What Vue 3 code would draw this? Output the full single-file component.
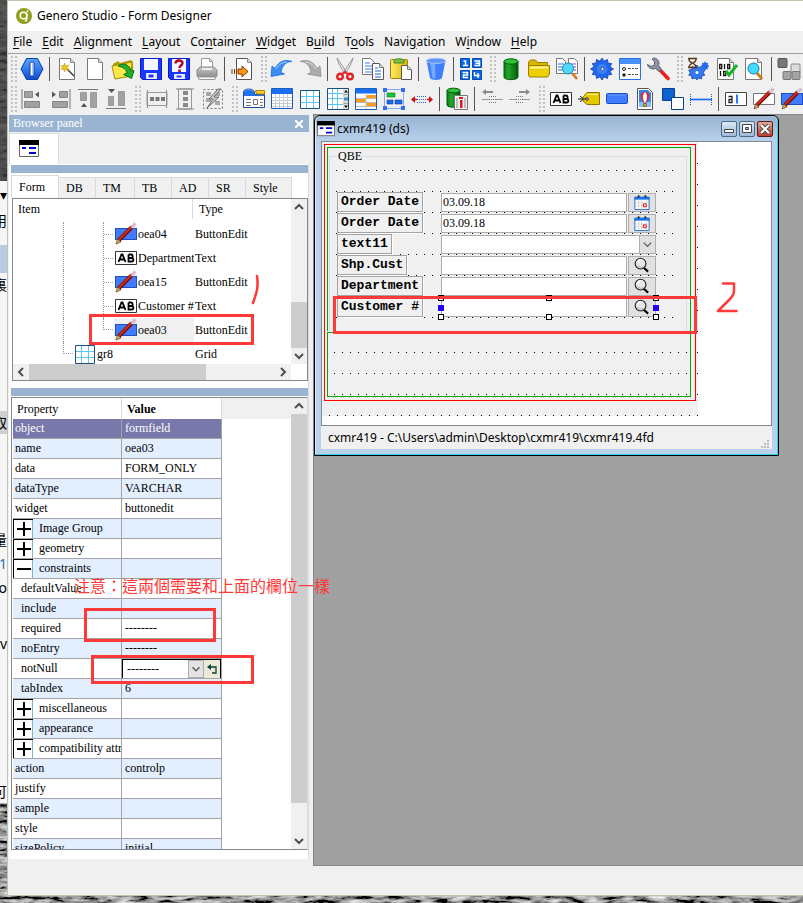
<script setup>
import { ref } from 'vue'

const menus = [
  ['', 'F', 'ile'], ['', 'E', 'dit'], ['', 'A', 'lignment'], ['', 'L', 'ayout'],
  ['Co', 'n', 'tainer'], ['', 'W', 'idget'], ['B', 'u', 'ild'], ['T', 'o', 'ols'],
  ['Navi', 'g', 'ation'], ['W', 'i', 'ndow'], ['', 'H', 'elp'],
]

const toolbars = [
  ['#', 'hex', '|', 'wand', 'new', 'open', 'save', 'saveas', 'print', '|', 'export',
    '#', 'undo', 'redo', '|', 'cut', 'copy', 'paste', '|', 'trash', '|', 'numbers',
    '#', 'database', 'folder', 'compare', '|', 'gear', 'options', 'wrench',
    '#', 'build', 'compile', 'preview', '|', 'blocks'],
  ['#', 'alignleft', 'alignright', 'aligntop', 'alignbottom', '#', 'spaceh', 'spacev', 'spaceoff',
    '#', 'folderpage', 'table', 'grid', 'scrollgrid', 'tree', 'group', 'stretch', '|', 'dbreport', '|', 'hleft', 'hright',
    '#', 'label', 'tag', 'button', 'image', 'canvas', 'line', '|', 'edit', 'textedit', 'buttonedit'],
]

const tabs = ['Form', 'DB', 'TM', 'TB', 'AD', 'SR', 'Style']
const activeTab = ref('Form')

const treeRows = [
  { name: 'oea04', type: 'ButtonEdit', icon: 'buttonedit' },
  { name: 'Department', type: 'Text', icon: 'label' },
  { name: 'oea15', type: 'ButtonEdit', icon: 'buttonedit' },
  { name: 'Customer #', type: 'Text', icon: 'label' },
  { name: 'oea03', type: 'ButtonEdit', icon: 'buttonedit', selected: true, last: true },
  { name: 'gr8', type: 'Grid', icon: 'grid', outer: true },
]

const properties = [
  { name: 'object', value: 'formfield', head: true },
  { name: 'name', value: 'oea03' },
  { name: 'data', value: 'FORM_ONLY' },
  { name: 'dataType', value: 'VARCHAR' },
  { name: 'widget', value: 'buttonedit' },
  { name: 'Image Group', toggle: '+' },
  { name: 'geometry', toggle: '+' },
  { name: 'constraints', toggle: '-' },
  { name: 'defaultValue', child: true },
  { name: 'include', child: true },
  { name: 'required', value: '--------', child: true },
  { name: 'noEntry', value: '--------', child: true },
  { name: 'notNull', value: '--------', child: true, editor: true },
  { name: 'tabIndex', value: '6', child: true },
  { name: 'miscellaneous', toggle: '+' },
  { name: 'appearance', toggle: '+' },
  { name: 'compatibility attri', toggle: '+' },
  { name: 'action', value: 'controlp' },
  { name: 'justify' },
  { name: 'sample' },
  { name: 'style' },
  { name: 'sizePolicy', value: 'initial' },
]

const fields = ref([
  { label: 'Order Date', value: '03.09.18', kind: 'calendar' },
  { label: 'Order Date', value: '03.09.18', kind: 'calendar' },
  { label: 'text11', value: '', kind: 'combo' },
  { label: 'Shp.Cust', value: '', kind: 'search' },
  { label: 'Department', value: '', kind: 'search' },
  { label: 'Customer #', value: '', kind: 'search', selected: true },
])
</script>

<template>
  <svg class="defs" aria-hidden="true">
    <defs>
      <linearGradient id="g-blue" x1="0" y1="0" x2="0" y2="1"><stop offset="0" stop-color="#5ea6ff" /><stop offset="1" stop-color="#0b4ed0" /></linearGradient>
      <linearGradient id="g-green"><stop offset="0" stop-color="#0b7a12" /><stop offset=".3" stop-color="#22a82a" /><stop offset="1" stop-color="#04580a" /></linearGradient>
      <linearGradient id="g-gray" x1="0" y1="0" x2="0" y2="1"><stop offset="0" stop-color="#c8c8c8" /><stop offset="1" stop-color="#8c8c8c" /></linearGradient>
      <linearGradient id="g-yellow"><stop offset="0" stop-color="#ffe96a" /><stop offset="1" stop-color="#d8b800" /></linearGradient>
      <filter id="rock" x="0" y="0" width="100%" height="100%">
        <feTurbulence type="fractalNoise" baseFrequency="0.06 0.25" numOctaves="4" seed="7" />
        <feColorMatrix values="1.6 0 0 0 -.5  1.6 0 0 0 -.5  1.6 0 0 0 -.5  0 0 0 0 1" />
      </filter>
      <pattern id="dots" width="8" height="21" patternUnits="userSpaceOnUse"><rect width="1" height="1" fill="#000" /></pattern>
      <pattern id="grip" width="4" height="4" patternUnits="userSpaceOnUse"><rect width="2" height="2" fill="#c2c2c2" /></pattern>
    </defs>

    <symbol id="i-hex" viewBox="0 0 24 24"><path d="M1 12 6.500 1.500h11L23 12l-5.500 10.500h-11z" fill="url(#g-blue)" stroke="#0a3ea8" /><rect x="10" y="5" width="4" height="14" rx="1" fill="#fff" stroke="#0a3fae" /><path d="M12.500 6v12" stroke="#a8ccff" /></symbol>
    <symbol id="i-wand" viewBox="0 0 24 24"><path d="M4.500 1.500h11l4 4v17h-15z" fill="#fff" stroke="#777" /><path d="M15.500 1.500v4h4" fill="#ddd" stroke="#888" /><path d="M12 12l7 7" stroke="#444" stroke-width="1.600" /><path d="M9.500 6l1 3 3.500-1-2 2.500 2 2.500-3.500-.8-1 2.800-1-2.800-2.500.3 1.500-2L6 8.500l2.500.5z" fill="#f0c818" stroke="#b38a00" stroke-width=".5" /></symbol>
    <symbol id="i-new" viewBox="0 0 24 24"><path d="M4.500 1.500h11l4 4v17h-15z" fill="#fff" stroke="#777" /><path d="M15.500 1.500v4h4" fill="#ddd" stroke="#888" /></symbol>
    <symbol id="i-open" viewBox="0 0 24 24"><path d="M2 7l5-3 2 2 11-3 2 2v14l-18 3z" fill="#b59b00" /><path d="M1 9l20-4-1 14-16 3z" fill="#ffe74a" stroke="#a58b00" /><path d="M7 9c6-4 12-1 13 5l3-.5-2.500 8-8-4 3.500-1.500C15 12 12 10 7 9z" fill="#22b02b" stroke="#0b7513" /></symbol>
    <symbol id="i-save" viewBox="0 0 24 24"><path d="M1.500 1.500h21v21h-19l-2-2z" fill="#1a37ff" stroke="#0a1cc8" /><path d="M5 2h14v11H5z" fill="#f2f6ff" /><path d="M7 16h11v6H7z" fill="#e2e6f2" /><rect x="9" y="17" width="6" height="4" fill="#1a37ff" stroke="#fff" /></symbol>
    <symbol id="i-saveas" viewBox="0 0 24 24"><path d="M1.500 1.500h21v21h-19l-2-2z" fill="#1a37ff" stroke="#0a1cc8" /><path d="M5 2h14v13H5z" fill="#f2f6ff" /><path d="M7 17h11v5H7z" fill="#e2e6f2" /><rect x="9" y="18" width="6" height="3" fill="#1a37ff" stroke="#fff" /><path d="M8.500 6.500C8.500 2.500 15.500 2.500 15.500 6c0 2.500-3 2.500-3 5" fill="none" stroke="#b3001b" stroke-width="2.400" /><rect x="11.300" y="12.500" width="2.500" height="2.500" fill="#b3001b" /></symbol>
    <symbol id="i-print" viewBox="0 0 24 24"><path d="M6.500 13V1.500h8l3 3V13" fill="#fff" stroke="#999" /><path d="M14.500 1.500v3h3" fill="none" stroke="#999" /><path d="M2 13l3-3h14l3 3v6l-2 1H4l-2-1z" fill="url(#g-gray)" stroke="#8a8a8a" /><path d="M7 11h10v2H7z" fill="#eee" /><path d="M3 20h18l-1 2.500H4z" fill="#f8f8f8" stroke="#999" /></symbol>
    <symbol id="i-export" viewBox="0 0 24 24"><path d="M6.500 1.500h11l4 4v17h-15z" fill="#fff" stroke="#555" /><path d="M17.500 1.500v4h4" fill="#ddd" stroke="#888" /><path d="M8 12h4V9l6 5.500-6 5.500v-3H8z" fill="#ff9414" stroke="#7a3b00" /><path d="M2 12v5M4.500 12v5M6.500 12v5" stroke="#7a3b00" /></symbol>
    <symbol id="i-undo" viewBox="0 0 24 24"><path d="M1 19.500 2 9l3 2.500C9 4 15 2 22 4.500c-6 0-10 4-11 11l3.500 1.500z" fill="#3b8ef5" stroke="#1769d8" stroke-width=".8" /><path d="M6 12c3-5 7-7 11-7" stroke="#a9d2ff" fill="none" /></symbol>
    <symbol id="i-redo" viewBox="0 0 24 24"><path d="M23 19.500 22 9l-3 2.500C15 4 9 2 2 4.500c6 0 10 4 11 11L9.500 17z" fill="#ababab" stroke="#8f8f8f" stroke-width=".8" /><path d="M18 12c-3-5-7-7-11-7" stroke="#ddd" fill="none" /></symbol>
    <symbol id="i-cut" viewBox="0 0 24 24"><path d="M4 1l9.500 14-2 1.500C8 11 5 6 4 1zM20 1l-9.500 14 2 1.500C16 11 19 6 20 1z" fill="#e6e6e6" stroke="#888" stroke-width=".8" /><circle cx="7" cy="19.500" r="2.800" fill="none" stroke="#e02424" stroke-width="2.400" /><circle cx="17" cy="19.500" r="2.800" fill="none" stroke="#e02424" stroke-width="2.400" /><path d="M9 17l3-2 3 2" stroke="#e02424" stroke-width="2" fill="none" /></symbol>
    <symbol id="i-copy" viewBox="0 0 24 24"><path d="M1.500 1.500h8l4 4v12h-12z" fill="#fff" stroke="#777" /><path d="M4 6h5M4 9h7M4 12h7M4 15h7" stroke="#3b7fe8" /><path d="M11.500 6.500h7l4 4v12h-11z" fill="#fff" stroke="#555" /><path d="M18.500 6.500v4h4" fill="#ddd" stroke="#777" /><path d="M14 11h3M14 14h6M14 17h6M14 20h6" stroke="#1d66dd" /></symbol>
    <symbol id="i-paste" viewBox="0 0 24 24"><rect x="1.500" y="2.500" width="17" height="19" rx="1" fill="url(#g-yellow)" stroke="#a87c00" /><path d="M5 4c0-3 10-3 10 0v2H5z" fill="#77c043" stroke="#4a8a22" /><path d="M12.500 8.500h6l4 4v10h-10z" fill="#fff" stroke="#555" /><path d="M18.500 8.500v4h4" fill="#ddd" stroke="#777" /></symbol>
    <symbol id="i-trash" viewBox="0 0 24 24"><path d="M2.500 3.500 6 21c1 2.500 11 2.500 12 0l3.500-17.500z" fill="#3f7fff" /><path d="M6 6l2.500 15 3 .5L11 6z" fill="#78a8ff" /><ellipse cx="12" cy="3.800" rx="9.500" ry="2.600" fill="#5f93f5" stroke="#a7c5ff" /></symbol>
    <symbol id="i-numbers" viewBox="0 0 24 24"><g fill="#0d6be8" stroke="#0648b0"><path d="M1.500 1.500h9v9h-9zM13.500 1.500h9v9h-9zM1.500 13.500h9v9h-9zM13.500 13.500h9v9h-9z" /></g><g fill="none" stroke="#fff" stroke-width="1.400"><path d="M4.500 4h2v4.500M4 8.500h5M15.500 4h5v4.500h-5M16.500 6.300h4M3.500 15.500h5V18h-4v2.500h4.500M15.500 15v3.500h5M19 16v5" /></g></symbol>
    <symbol id="i-database" viewBox="0 0 24 24"><path d="M5 4.500v15.500c0 3.500 14 3.500 14 0V4.500z" fill="url(#g-green)" stroke="#045c0a" /><ellipse cx="12" cy="4.500" rx="7" ry="2.700" fill="#2fc23a" stroke="#045c0a" /></symbol>
    <symbol id="i-folder" viewBox="0 0 24 24"><path d="M1.500 18V5l2-2h5l2 2.500h10V9" fill="#d9b600" stroke="#9a8000" /><path d="M1.500 8.500h21V17l-2 3h-18l-1-2z" fill="#ecd000" stroke="#9a8000" /><path d="M3 10.500h18" stroke="#fff79a" stroke-width="2" /></symbol>
    <symbol id="i-compare" viewBox="0 0 24 24"><path d="M1.500 1.500h6l3 3v12h-9zM13.500 1.500h6l3 3v12h-9z" fill="#fff" stroke="#777" /><path d="M3 7h6M3 10h6M3 13h6" stroke="#2a6fe0" /><path d="M15 7h6M15 10h6M15 13h6" stroke="#8a3fd0" /><path d="M17 16l5 6" stroke="#d07a1c" stroke-width="2.600" /><circle cx="13" cy="11.500" r="5.500" fill="#4fd8f8" stroke="#158fb8" /></symbol>
    <symbol id="i-gear" viewBox="0 0 24 24"><path d="M12 1l2 3.200L17.500 2.500l.5 3.700 3.700.3-1.700 3.300L23.500 12l-3.500 2.200 1.700 3.300-3.700.3-.5 3.700-3.500-1.700L12 23l-2-3.200-3.500 1.700-.5-3.700-3.700-.3L4 14.200.5 12 4 9.800 2.300 6.500 6 6.200l.5-3.700L10 4.200z" fill="#2268ee" stroke="#0a3cb0" stroke-width=".8" /><circle cx="12" cy="12" r="5" fill="#3a80f8" /><circle cx="12.500" cy="12" r="1.500" fill="#fff" stroke="#222" stroke-width=".6" /></symbol>
    <symbol id="i-options" viewBox="0 0 24 24"><path d="M1.500 1.500h21v21h-21z" fill="#fff" stroke="#2a6fe0" /><path d="M2 2h20v5H2z" fill="#4a90ff" /><circle cx="6" cy="12" r="1.500" fill="none" stroke="#222" /><circle cx="6" cy="18" r="1.700" fill="#222" /><path d="M10 11.500h3M14 11.500h2M17 11.500h3M10 17.500h3M14 17.500h2M17 17.500h3" stroke="#555" /></symbol>
    <symbol id="i-wrench" viewBox="0 0 24 24"><path d="M13 12l9 9.500" stroke="#ee1c1c" stroke-width="3.600" stroke-linecap="round" /><path d="M8 1c4 .5 6 4 4.500 7.500l3 4-2.500 2-3.500-3C6 13 2 11 1.500 7.500l3.500 2L8.500 8V4.500L6 2z" fill="#8d93a3" stroke="#5a6070" /></symbol>
    <symbol id="i-build" viewBox="0 0 24 24"><path d="M11 8l1.500 2.500 3-1 .3 3 3 .5-1.500 2.700 1.500 2.500-3 .8-.3 3-3-1L11 23l-2-2-3 1-.3-3-3-.8 1.500-2.500L2.700 13l3-.5.3-3 3 1z" fill="#3478ee" stroke="#0a3cb0" stroke-width=".7" /><circle cx="11" cy="15.500" r="1.500" fill="#fff" /><path d="M19 4l1 2 2-.3-.3 2 1.600 1.300-1.600 1.300.3 2-2-.3-1 2-1-2-2 .3.300-2L14.700 9l1.600-1.300-.3-2 2 .3z" fill="#2268ee" /><path d="M2 1.500h9M2 10.500h9M3 2c0 4 3 3 3 4s-3 1-3 4.500M10 2c0 4-3 3-3 4s3 1 3 4.500" fill="none" stroke="#5a3510" stroke-width="1.300" /></symbol>
    <symbol id="i-compile" viewBox="0 0 24 24"><path d="M3.500 1.500h12l4 4v17h-16z" fill="#fff" stroke="#777" /><path d="M15.500 1.500v4h4" fill="#ddd" stroke="#777" /><g fill="none" stroke="#111" stroke-width="1.300"><path d="M5.700 7.500h2v4h-2zM10.500 7v5M13.700 7.500h2v4h-2zM6.500 14v5M9.700 14.500h2v4h-2z" /></g><path d="M12 14l3 4 8-10" fill="none" stroke="#18b52b" stroke-width="3.200" /></symbol>
    <symbol id="i-preview" viewBox="0 0 24 24"><path d="M3.500 1.500h12l4 4v17h-16z" fill="#fff" stroke="#777" /><path d="M15.500 1.500v4h4" fill="#ddd" stroke="#777" /><path d="M15 16l5 6" stroke="#d07a1c" stroke-width="2.800" /><circle cx="11.500" cy="11.500" r="5.500" fill="#3fdcff" stroke="#1478a0" /></symbol>
    <symbol id="i-blocks" viewBox="0 0 24 24"><rect x="1" y="1.500" width="9" height="9" rx="1" fill="#777" stroke="#555" /><rect x="14" y="7" width="9" height="9" rx="1" fill="#ddd" stroke="#888" /><rect x="6" y="14.500" width="8" height="8" rx="1" fill="#a5a5a5" stroke="#777" /><rect x="15" y="14.500" width="8" height="8" rx="1" fill="#a5a5a5" stroke="#777" /></symbol>

    <symbol id="i-alignleft" viewBox="0 0 24 24"><g fill="#a2a2a2" stroke="#858585"><path d="M4.500 4.500h8v6h-8zM4.500 14.500h15v6h-15z" /></g><path d="M2 2v20" stroke="#777" /><path d="M19 4.500v6l-4-3z" fill="#555" /></symbol>
    <symbol id="i-alignright" viewBox="0 0 24 24"><g fill="#a2a2a2" stroke="#858585"><path d="M11.500 4.500h8v6h-8zM4.500 14.500h15v6h-15z" /></g><path d="M22 2v20" stroke="#777" /><path d="M4 4.500v6l4-3z" fill="#555" /></symbol>
    <symbol id="i-aligntop" viewBox="0 0 24 24"><g fill="#a2a2a2" stroke="#9a9a9a"><path d="M4.500 5.500h6v8h-6zM14.500 5.500h6v15h-6z" /></g><path d="M2 2.500h20" stroke="#777" /><path d="M5 20h6l-3-4z" fill="#555" /></symbol>
    <symbol id="i-alignbottom" viewBox="0 0 24 24"><g fill="#a2a2a2" stroke="#9a9a9a"><path d="M4.500 9.500h5v9h-5zM14.500 4.500h6v14h-6z" /></g><path d="M2 21.500h20" stroke="#777" /><path d="M4 2h7l-3.500 4z" fill="#555" /></symbol>
    <symbol id="i-spaceh" viewBox="0 0 24 24"><path d="M2.500 3v18M21.500 3v18" stroke="#888" /><path d="M2 5.500h20v13H2z" fill="none" stroke="#999" /><path d="M5 10h4v4H5zM10.500 10h4v4h-4zM16 10h4v4h-4z" fill="#777" /></symbol>
    <symbol id="i-spacev" viewBox="0 0 24 24"><path d="M5.500 2h13v20h-13z" fill="none" stroke="#999" /><path d="M3 2h18M3 22h18" stroke="#888" /><path d="M10 4h5v4h-5zM10 10h5v4h-5zM10 16h5v4h-5z" fill="#888" /></symbol>
    <symbol id="i-spaceoff" viewBox="0 0 24 24"><path d="M2.500 2.500h19v19h-19z" fill="none" stroke="#777" stroke-dasharray="2 2" /><path d="M5 5h5v4H5zM5 11h5v4H5zM14 5h5v4h-5zM14 14h5v4h-5z" fill="#a8a8a8" /><path d="M17 2 8 12h4l-6 9 12-11h-5l7-8z" fill="#c5c5c5" stroke="#555" stroke-width=".8" /></symbol>
    <symbol id="i-folderpage" viewBox="0 0 24 24"><path d="M1.500 5c0-4 10-4 11 0v2.500h10v13h-21z" fill="#fff" stroke="#1a4ba0" /><path d="M2 5c0-3 9-3 10 0l1 3h9v1H2z" fill="#2070f0" /><path d="M13.500 3.500h9V7h-8z" fill="#ffc93a" stroke="#b88500" /><path d="M4 12.500h5M4 15.500h5M4 18.500h5M18 12.500h3M18 15.500h3M18 18.500h3M11.500 12.500h4v5h-4z" fill="none" stroke="#777" /></symbol>
    <symbol id="i-table" viewBox="0 0 24 24"><path d="M1.500 1.500h21v20h-21z" fill="#fff" stroke="#1a5cc0" /><path d="M2 2h20v5H2z" fill="#1a6cf0" /><path d="M2 10.500h20M2 13.500h20M2 16.500h20M2 19.500h20M5.500 7v14M9.500 7v14M13.500 7v14M17.500 7v14" stroke="#c8ccd4" /></symbol>
    <symbol id="i-grid" viewBox="0 0 24 24"><path d="M2.500 3.500h19v18h-19z" fill="#fff" stroke="#1d4f80" /><path d="M3 9.500h18M3 15.500h18M8.500 4v17M15.500 4v17" stroke="#5cc6ee" /></symbol>
    <symbol id="i-scrollgrid" viewBox="0 0 24 24"><path d="M1.500 1.500h21v21h-21z" fill="#fff" stroke="#1d4f80" /><path d="M2 6.500h15M2 11.500h15M2 17.500h15M6.500 2v20M11.500 2v20" stroke="#5cc6ee" /><path d="M17 2h5v20h-5z" fill="#ddd" /><path d="M17.500 7.500h4M17.500 16.500h4" stroke="#999" /><path d="M18 10.500h4v3h-4z" fill="#3b8fd8" /><path d="M18 5.500l2-2.500 2 2.500zM18 18.500l2 2.500 2-2.500z" fill="#111" /></symbol>
    <symbol id="i-tree" viewBox="0 0 24 24"><path d="M1.500 1.500h21v21h-21z" fill="#fff" stroke="#1a5cc0" /><path d="M2 2h20v4.500H2z" fill="#1a6cf0" /><path d="M2 12h10v3.500H2zM12 8h10v3H12zM12 16h10v3.500H12z" fill="#ff9a1f" /><path d="M12 7v15" stroke="#ccc" /><path d="M2 11.500h20M2 15.500h20M2 19.500h20" stroke="#bbb" /></symbol>
    <symbol id="i-group" viewBox="0 0 24 24"><path d="M2.500 2.500h19v19h-19z" fill="none" stroke="#2260e8" stroke-dasharray="1 1" /><path d="M1 1h4v4H1zM19 1h4v4h-4zM1 19h4v4H1zM19 19h4v4h-4z" fill="#2f6ff5" /><path d="M5 6h8v4H5z" fill="#12c832" stroke="#0a7a1a" stroke-width=".6" /><path d="M5 13h6v4H5zM13 13h7v4h-7z" fill="#1a6cf0" stroke="#0a3ea0" stroke-width=".6" /></symbol>
    <symbol id="i-stretch" viewBox="0 0 24 24"><path d="M1 12.500 5 9v7zM23 12.500 19 9v7z" fill="#d01018" /><path d="M4 12.500h3M17 12.500h3" stroke="#d01018" stroke-width="1.600" /><path d="M7 9.500h10M7 12.500h10M7 15.500h10" stroke="#2468e8" stroke-dasharray="1 1" /></symbol>
    <symbol id="i-dbreport" viewBox="0 0 24 24"><path d="M2 3.500V18c0 3 13 3 13 0V3.500z" fill="url(#g-green)" stroke="#045c0a" /><ellipse cx="8.500" cy="3.500" rx="6.500" ry="2.300" fill="#2fc23a" stroke="#045c0a" /><path d="M9.500 8.500h13v14h-13z" fill="#f3f3f3" stroke="#777" /><path d="M12 11v10M20 11v10" stroke="#888" /><path d="M14 10h4v2h-4zM15 13h2.500v8H15z" fill="#e01818" /></symbol>
    <symbol id="i-hleft" viewBox="0 0 24 24"><path d="M2 5l4-3v2h7v2H6v2z" fill="#8c8c8c" /><path d="M2 12.500h7M16 12.500h7" stroke="#999" /><path d="M9 9.500h7M9 12.500h7M9 15.500h7" stroke="#777" stroke-dasharray="1 1" /></symbol>
    <symbol id="i-hright" viewBox="0 0 24 24"><path d="M22 5l-4-3v2h-7v2h7v2z" fill="#8c8c8c" /><path d="M1 12.500h7M15 12.500h7" stroke="#999" /><path d="M8 9.500h7M8 12.500h7M8 15.500h7" stroke="#777" stroke-dasharray="1 1" /></symbol>
    <symbol id="i-label" viewBox="0 0 24 24"><path d="M1.500 5.500h21v13h-21z" fill="#fff" stroke="#333" /><path d="M4.500 16 7.500 8.500h1L11.500 16M6 13.500h4M14.500 8.500V15.500h3c2.500 0 2.500-3.500 0-3.500h-3M17 12c2.500 0 2-3.500 0-3.500h-2.500" fill="none" stroke="#000" stroke-width="1.800" /></symbol>
    <symbol id="i-tag" viewBox="0 0 24 24"><path d="M6 10l4-4.500h12.500v12H10L6 14z" fill="#e6c800" stroke="#8d7500" /><path d="M10 7.500h11" stroke="#fff38a" /><path d="M1 12h9M3 9.500c3 0 3 5 0 5" fill="none" stroke="#222" /><circle cx="10" cy="12" r="1.300" fill="#fff" stroke="#222" /></symbol>
    <symbol id="i-button" viewBox="0 0 24 24"><rect x="1.500" y="6.500" width="21" height="10" rx="1" fill="#3f7cff" stroke="#1b4fc0" /><path d="M3 8h18" stroke="#6d9cff" /></symbol>
    <symbol id="i-image" viewBox="0 0 24 24"><path d="M4.500 1.500h11l4 4v17h-15z" fill="#fff" stroke="#555" /><path d="M6 3h9l3 3v14H6z" fill="#2f86ee" /><path d="M6 15h12v5H6z" fill="#7cc0ff" /><path d="M12 4.500c7 1 3.500 9 1.500 11h-3C8.500 13.500 5 5.500 12 4.500z" fill="#e12b2b" /><path d="M12 5c3 2 2 8 .7 10h-1.400C10 13 9 7 12 5z" fill="#fff" /><path d="M10.500 16.500h3v3h-3z" fill="#d8a020" stroke="#6b4a00" stroke-width=".6" /></symbol>
    <symbol id="i-canvas" viewBox="0 0 24 24"><path d="M1.500 1.500h12v12h-12z" fill="#0f62d0" stroke="#08408f" /><path d="M10.500 10.500h12v12h-12z" fill="#fff" stroke="#08408f" /></symbol>
    <symbol id="i-line" viewBox="0 0 24 24"><path d="M1.500 7v11M22.500 7v11" stroke="#0a58e0" stroke-dasharray="1 1" /><path d="M1 12.500h22" stroke="#1668f8" stroke-width="1.600" /></symbol>
    <symbol id="i-edit" viewBox="0 0 24 24"><path d="M1.500 5.500h21v13h-21z" fill="#fff" stroke="#444" /><path d="M4.500 9.500h3.500v6H5v-3h3" fill="none" stroke="#222" stroke-width="1.300" /><path d="M13 7.500v9" stroke="#1668f8" stroke-width="1.800" /></symbol>
    <symbol id="i-textedit" viewBox="0 0 24 24"><path d="M1.500 6.500h21v11h-21z" fill="#fff" stroke="#777" /><path d="M5 18 18 5" stroke="#701008" stroke-width="4" /><path d="M5 17.500 17.500 5" stroke="#d42a18" stroke-width="2" /><path d="M17.500 5.500l4-4" stroke="#d8c0d4" stroke-width="3.500" /><path d="M2 22l1.500-5L7 20z" fill="#f2a53c" stroke="#333" stroke-width=".6" /></symbol>
    <symbol id="i-buttonedit" viewBox="0 0 24 24"><rect x="1.500" y="6.500" width="21" height="11" fill="#3f7cff" stroke="#1b4fc0" /><path d="M5 18 18 5" stroke="#701008" stroke-width="4" /><path d="M5 17.500 17.500 5" stroke="#d42a18" stroke-width="2" /><path d="M17.500 5.500l4-4" stroke="#d8c0d4" stroke-width="3.500" /><path d="M2 22l1.500-5L7 20z" fill="#f2a53c" stroke="#333" stroke-width=".6" /></symbol>

    <symbol id="i-form" viewBox="0 0 20 18"><path d="M.5.5h19v16H.5z" fill="#fff" stroke="#666" /><path d="M0 0h20v5H0z" fill="#000" /><path d="M3 8h4M10 8h7M10 13h7" stroke="#00c" stroke-width="2" /></symbol>
    <symbol id="i-calendar" viewBox="0 0 18 18"><path d="M1.500 3.500h15v13h-15z" fill="#fff" stroke="#1668d8" /><path d="M1 3h16v3H1z" fill="#1672e8" /><path d="M2 9.500h14M2 12.500h14M5.500 6v10M8.500 6v10M13.500 6v10" stroke="#d4d4d4" /><path d="M10.500 10.500h3v3h-3z" fill="#fff" stroke="#e00000" /><path d="M5.500 1v3M12.500 1v3M4 2.500h3M11 2.500h3" stroke="#333" /></symbol>
    <symbol id="i-search" viewBox="0 0 18 18"><path d="M10 10.500l5.500 5" stroke="#000" stroke-width="2.200" /><circle cx="7.500" cy="7" r="5.700" fill="#e8e8e8" stroke="#222" stroke-width="1.200" /><path d="M4.500 8.500c1 3 5 3 6 1" stroke="#aaa" fill="none" /><path d="M4.500 5.500c.5-1.500 2-2 3-2" stroke="#fff" stroke-width="1.500" fill="none" /></symbol>
    <symbol id="i-up" viewBox="0 0 16 16"><path d="M4 10l4-4 4 4" fill="none" stroke="#505050" stroke-width="2" /></symbol>
    <symbol id="i-down" viewBox="0 0 16 16"><path d="M4 6l4 4 4-4" fill="none" stroke="#505050" stroke-width="2" /></symbol>
    <symbol id="i-left" viewBox="0 0 16 16"><path d="M10 4L6 8l4 4" fill="none" stroke="#505050" stroke-width="2" /></symbol>
    <symbol id="i-right" viewBox="0 0 16 16"><path d="M6 4l4 4-4 4" fill="none" stroke="#505050" stroke-width="2" /></symbol>
  </svg>

  <div class="desktop">
    <svg class="rock" aria-hidden="true"><rect width="100%" height="100%" filter="url(#rock)" /><rect width="8" height="200" fill="#3c3c3c" opacity=".8" /></svg>
    <div class="behind">
      <span class="frag mark">▾</span>
      <span class="frag cjk">用</span>
      <span class="frag chip"></span>
      <span class="frag cjk low">裏</span>
      <span class="frag pick">取</span>
      <span class="frag cjk far">量</span>
      <span class="frag blue">41</span>
      <span class="frag">o</span>
      <span class="frag v">v</span>
      <span class="frag cjk end">可</span>
    </div>

    <div class="window">
      <header class="titlebar">
        <svg class="logo" viewBox="0 0 16 16" aria-hidden="true"><circle cx="8" cy="8" r="8" fill="#8f9f1e" /><circle cx="7.500" cy="7.500" r="3.300" fill="none" stroke="#fff" stroke-width="1.500" /><path d="M10.800 5v5.500c0 1.500-1 2.500-2 2.500" stroke="#fff" stroke-width="1.400" fill="none" /><circle cx="11.500" cy="3.200" r=".9" fill="#fff" /></svg>
        <h1>Genero Studio - Form Designer</h1>
      </header>
      <nav class="menubar">
        <button v-for="m in menus" :key="m.join('')" type="button">{{ m[0] }}<u>{{ m[1] }}</u>{{ m[2] }}</button>
      </nav>
      <div class="toolbars">
        <div v-for="(bar, b) in toolbars" :key="b" class="toolbar" :class="{ second: b === 1 }">
          <template v-for="(item, i) in bar" :key="i">
            <svg v-if="item === '#'" class="grip" aria-hidden="true"><rect width="100%" height="100%" fill="url(#grip)" /></svg>
            <i v-else-if="item === '|'" class="sep"></i>
            <button v-else type="button" class="tool" :aria-label="item"><svg><use :href="'#i-' + item" /></svg></button>
          </template>
        </div>
      </div>

      <div class="work">
        <aside class="browser">
          <div class="panel-title">
            <h2>Browser panel</h2>
            <button type="button" aria-label="Close"><svg viewBox="0 0 8 8"><path d="M0 0l8 8M8 0L0 8" stroke="#fff" stroke-width="2" /></svg></button>
          </div>
          <div class="doc-tabs"><button type="button" aria-label="Form document"><svg><use href="#i-form" /></svg></button></div>
          <div class="panes">
            <div class="bar"></div>
            <div class="tabs">
              <button v-for="t in tabs" :key="t" type="button" :class="{ active: t === activeTab }" @click="activeTab = t">{{ t }}</button>
            </div>
            <div class="tree-box">
              <div class="tree-main">
                <div class="tree-view">
                  <div class="tree-head"><span>Item</span><span>Type</span></div>
                  <div v-for="r in treeRows" :key="r.name" class="tree-row" :class="{ outer: r.outer, last: r.last, selected: r.selected }">
                    <i class="rail"></i><i class="rail inner"></i>
                    <div class="node"><svg><use :href="'#i-' + r.icon" /></svg><span>{{ r.name }}</span></div>
                    <span class="type">{{ r.type }}</span>
                  </div>
                </div>
                <div class="vscroll" aria-hidden="true"><svg><use href="#i-up" /></svg><i class="gap"></i><i class="thumb"></i><svg><use href="#i-down" /></svg></div>
              </div>
              <div class="hscroll" aria-hidden="true"><svg><use href="#i-left" /></svg><i class="thumb"></i><i class="gap"></i><svg><use href="#i-right" /></svg></div>
            </div>
            <div class="bar split"></div>
            <div class="prop-box">
              <div class="prop-view">
                <table>
                  <thead><tr><th>Property</th><th class="bold">Value</th><th class="rest"></th></tr></thead>
                  <tbody>
                    <tr v-for="p in properties" :key="p.name" :class="{ head: p.head }">
                      <td :class="{ child: p.child, group: p.toggle }">
                        <div class="prop-name">
                          <button v-if="p.toggle" type="button" class="toggle" :aria-label="'Toggle ' + p.name"><svg viewBox="0 0 14 14"><path :d="p.toggle === '+' ? 'M0 7h14M7 0v14' : 'M0 7h14'" stroke="#000" stroke-width="2" /></svg></button>
                          <span>{{ p.name }}</span>
                        </div>
                      </td>
                      <td :class="{ editing: p.editor }">
                        <div v-if="p.editor" class="editor">
                          <select aria-label="notNull"><option>--------</option></select>
                          <svg class="drop" viewBox="0 0 16 16" aria-hidden="true"><path d="M4 6l4 4 4-4" fill="none" stroke="#555" stroke-width="1.500" /></svg>
                          <button type="button" aria-label="Reset"><svg viewBox="0 0 12 12"><path d="M1 4l4-3v6z" fill="#06453a" /><path d="M4 4h6v6H6" fill="none" stroke="#06453a" stroke-width="1.300" /></svg></button>
                        </div>
                        <template v-else>{{ p.value }}</template>
                      </td>
                    </tr>
                  </tbody>
                </table>
              </div>
              <div class="vscroll props" aria-hidden="true"><svg><use href="#i-up" /></svg><i class="thumb"></i><i class="gap"></i><svg><use href="#i-down" /></svg></div>
            </div>
          </div>
        </aside>

        <main class="mdi">
          <section class="child-win">
            <header class="child-title">
              <svg class="form-icon" aria-hidden="true"><use href="#i-form" /></svg>
              <h2>cxmr419 (ds)</h2>
              <button type="button" aria-label="Minimize"><svg viewBox="0 0 12 12"><path d="M1.500 6.500h9v3h-9z" fill="#fff" stroke="#444" /></svg></button>
              <button type="button" aria-label="Maximize"><svg viewBox="0 0 12 12"><path d="M1.500 1.500h9v8h-9z" fill="#fff" stroke="#444" /><path d="M4.500 4.500h3v2h-3z" fill="#9cb8d4" stroke="#444" /></svg></button>
              <button type="button" class="close" aria-label="Close"><svg viewBox="0 0 12 12"><path d="M2 2l8 8M10 2L2 10" stroke="#444" stroke-width="4" /><path d="M2 2l8 8M10 2L2 10" stroke="#fff" stroke-width="2.200" /></svg></button>
            </header>
            <div class="client">
              <div class="canvas">
                <svg class="dots" aria-hidden="true"><rect width="100%" height="100%" fill="url(#dots)" /></svg>
                <div class="root">
                  <div class="vbox">
                    <fieldset>
                      <legend>QBE</legend>
                      <svg class="dots" aria-hidden="true"><rect width="100%" height="100%" fill="url(#dots)" /></svg>
                      <div v-for="(f, i) in fields" :key="i" class="row">
                        <div class="cap"><label :for="'f' + i">{{ f.label }}</label></div>
                        <div v-if="f.kind === 'combo'" class="field combo">
                          <select :id="'f' + i"><option></option></select>
                          <svg viewBox="0 0 16 16" aria-hidden="true"><path d="M4 6l4 4 4-4" fill="none" stroke="#555" stroke-width="1.300" /></svg>
                        </div>
                        <div v-else class="field">
                          <input :id="'f' + i" v-model="f.value" type="text">
                          <button type="button" :aria-label="f.kind"><svg><use :href="'#i-' + f.kind" /></svg></button>
                          <div v-if="f.selected" class="handles" aria-hidden="true">
                            <i></i><i></i><i></i><i class="solid"></i><b></b><i class="solid"></i><i></i><i></i><i></i>
                          </div>
                        </div>
                      </div>
                    </fieldset>
                  </div>
                  <div class="vbox lower"><svg class="dots" aria-hidden="true"><rect width="100%" height="100%" fill="url(#dots)" /></svg></div>
                </div>
              </div>
            </div>
            <footer class="child-status">
              <span>cxmr419 - C:\Users\admin\Desktop\cxmr419\cxmr419.4fd</span>
              <svg viewBox="0 0 9 9" aria-hidden="true"><path d="M6 0h2v2H6zM3 3h2v2H3zM6 3h2v2H6zM0 6h2v2H0zM3 6h2v2H3zM6 6h2v2H6z" fill="#bbb" /></svg>
            </footer>
          </section>
        </main>
      </div>
    </div>

    <svg class="marks" aria-hidden="true">
      <g fill="none" stroke="#ff3838" stroke-width="3">
        <rect x="90.500" y="315.500" width="162" height="28" />
        <rect x="85.500" y="609.500" width="129" height="31" />
        <rect x="92.500" y="656.500" width="160" height="26" />
        <rect x="334.500" y="297.500" width="361" height="35" />
        <g stroke-width="2.500" stroke-linecap="round" stroke-linejoin="round">
          <path d="M257 276c1 7 1 11-.5 16s-2 7-3.500 11" />
          <path d="M723 283.500h11v7c0 4-1 5-5 9.500l-11 11h18.500" />
        </g>
      </g>
    </svg>
    <p class="note">注意：這兩個需要和上面的欄位一樣</p>
  </div>
</template>

<style>
body { background: #333; overflow: hidden; }
</style>

<style scoped>
* { box-sizing: border-box; }
button, input, select { font: inherit; color: inherit; margin: 0; padding: 0; border: 0; border-radius: 0; background: none; }
select { appearance: none; }
h1, h2, p { margin: 0; font: inherit; }
svg { display: block; }
.defs { position: absolute; width: 0; height: 0; }

.desktop { position: relative; display: flex; height: 100vh; padding-bottom: 7px; overflow: hidden; font: 12px/18px "Liberation Serif", "Noto Sans CJK TC", serif; color: #000; }
.rock { position: absolute; inset: 0; width: 100%; height: 100%; }
.behind { position: relative; flex: none; width: 7px; margin: 181px 0 93px; overflow: hidden; background: #f6f6f6; display: flex; flex-direction: column; align-items: flex-end; font: 14px/16px "Noto Sans", "Noto Sans CJK TC", sans-serif; }
.frag { flex: none; height: 16px; margin-bottom: 8px; }
.mark { margin: 6px 0 10px; }
.chip { width: 7px; height: 28px; margin: 8px 0 4px; background: #b9cbe4; }
.low { margin-bottom: 118px; }
.pick { height: 23px; margin: 0 0 98px; line-height: 23px; background: #d0d0d0; }
.blue { color: #2a6db8; }
.v { margin: 32px 0 0; }
.end { margin: 132px 0 0; }

.window { position: relative; flex: 1; min-width: 0; display: flex; flex-direction: column; background: #f0f0f0; border: 1px solid #bcc6b0; border-width: 1px 0 1px 1px; }
.titlebar { flex: none; height: 30px; display: flex; align-items: center; gap: 5px; padding-left: 8px; background: #fff; font: 12px/18px "Noto Sans", sans-serif; }
.logo { width: 16px; height: 16px; }
.menubar { flex: none; height: 23px; display: flex; gap: 10px; padding-left: 5px; border-bottom: 1px solid #a0a0a0; font: 12px/20px "Noto Sans", sans-serif; }
.menubar u { text-underline-offset: 2px; }

.toolbars { flex: none; overflow: hidden; }
.toolbar { display: flex; align-items: center; height: 30px; }
.grip { flex: none; width: 6px; height: 26px; margin: 0 1px 0 5px; }
.toolbar .grip:first-child { margin: 0 1px 0 3px; }
.second .grip { margin-right: 2px; }
.sep { flex: none; width: 1px; height: 24px; margin: 0 3px; background: #555; }
.tool { flex: none; width: 28px; height: 28px; display: grid; place-items: center; }
.tool svg { width: 24px; height: 24px; }

.work { flex: 1; min-height: 0; display: flex; gap: 4px; padding-bottom: 29px; }
.browser { flex: none; width: 301px; display: flex; flex-direction: column; padding: 1px 0 7px 1px; }
.panel-title { flex: none; height: 17px; display: flex; justify-content: space-between; align-items: center; padding: 0 6px 0 4px; background: #99b4d1; color: #fff; line-height: 15px; }
.panel-title button { display: grid; place-items: center; width: 8px; height: 14px; }
.panel-title svg { width: 8px; height: 8px; }
.doc-tabs { flex: none; height: 32px; display: flex; padding-top: 1px; }
.doc-tabs button { width: 50px; padding-left: 9px; background: #fff; border: 1px solid #dcdcdc; border-bottom: 0; }
.doc-tabs svg { width: 20px; height: 18px; }
.panes { flex: 1; min-height: 0; display: flex; flex-direction: column; padding: 1px 0 9px 2px; background: #fff; border: 1px solid #dcdcdc; border-width: 0 1px 0 0; }
.bar { flex: none; height: 8px; background: #99b4d1; }
.tabs { flex: none; height: 25px; display: flex; align-items: flex-end; }
.tabs button { height: 21px; padding: 0 6px 0 7px; background: #f0f0f0; border: 1px solid #d9d9d9; border-width: 1px 1px 0 0; line-height: 17px; min-width: 37px; text-align: left; }
.tabs button.active { height: 23px; width: 48px; background: #fff; border-left-width: 1px; }
.tabs button:nth-child(3) { width: 39px; }
.tabs button:last-child { width: 46px; }

.tree-box { flex: none; margin-left: 1px; border: 1px solid #828790; }
.tree-main { display: flex; height: 165px; }
.tree-view { flex: 1; min-width: 0; overflow: hidden; }
.tree-head { display: flex; height: 23px; line-height: 20px; padding-left: 5px; }
.tree-head span:first-child { flex: 0 0 175px; height: 20px; border-right: 1px solid #d9d9d9; }
.tree-head span:last-child { padding-left: 6px; }
.tree-row { display: flex; align-items: center; height: 24px; white-space: nowrap; }
.rail { flex: none; align-self: stretch; width: 40px; margin-left: 50px; border-left: 1px dotted #999; }
.rail.inner { width: 11px; margin-left: 0; background: linear-gradient(90deg, #aaa 1px, transparent 1px) 0 12px / 2px 1px repeat-x; }
.last .rail.inner { align-self: flex-start; height: 12px; background-position: 0 11px; }
.node { flex: none; display: flex; align-items: center; width: 80px; height: 24px; overflow: hidden; }
.node svg { flex: none; width: 24px; height: 24px; }
.selected .node { background: #f0f0f0; }
.type { padding-left: 1px; }
.outer .rail { align-self: flex-start; height: 12px; width: 10px; background: linear-gradient(90deg, #aaa 1px, transparent 1px) 0 11px / 2px 1px repeat-x; }
.outer .rail.inner { display: none; }
.outer .node { width: 121px; }

.vscroll { flex: none; width: 16px; display: flex; flex-direction: column; background: #f0f0f0; }
.vscroll svg, .hscroll svg { flex: none; width: 16px; height: 16px; }
.vscroll .gap, .hscroll .gap { flex: 1; }
.thumb { background: #cdcdcd; }
.vscroll .thumb { height: 46px; }
.hscroll { display: flex; width: 278px; height: 16px; background: #f0f0f0; }
.hscroll .thumb { width: 177px; }
.split { margin-top: 7px; }

.prop-box { flex: 1; min-height: 0; display: flex; margin-top: 1px; border: 1px solid #828790; border-right-color: #dcdcdc; padding-left: 1px; }
.prop-view { flex: 1; min-width: 0; overflow: hidden; }
table { width: 100%; table-layout: fixed; border-collapse: separate; border-spacing: 0; }
th { height: 21px; padding: 0 0 0 4px; text-align: left; font-weight: normal; border-right: 1px solid #dcdcdc; }
th:nth-child(1) { width: 109px; }
th:nth-child(2) { width: 100px; padding-left: 5px; }
.bold { font-weight: bold; }
th.rest { background: #f0f0f0; border: 0; }
td { height: 20px; padding: 0 0 0 2px; line-height: 17px; white-space: nowrap; overflow: hidden; border: 1px solid #a3a3a3; border-width: 0 1px 1px 0; }
td:nth-child(2) { padding-left: 3px; }
tbody tr:nth-child(even) td { background: #e3eeff; }
tbody tr.head td { background: #7878aa; color: #fff; }
td.child { padding-left: 8px; }
td.group { padding: 0; }
.prop-name { display: flex; align-items: center; gap: 6px; height: 19px; }
.toggle { flex: none; width: 20px; height: 19px; display: grid; place-items: center; background: #fff; border: 1px solid #000; border-width: 1px 0 0 1px; box-shadow: inset -1px 0 #7fb4cc; }
.toggle svg { width: 14px; height: 14px; }
td.editing:nth-child(2) { padding: 0; }
.editor { display: flex; height: 20px; border: 1px solid #000; background: #fff; margin-bottom: -1px; }
.editor select { flex: 1; min-width: 0; padding-left: 4px; line-height: 17px; }
.editor .drop { width: 16px; height: 18px; background: #e3e3e3; border: 1px solid #adadad; }
.editor button { width: 16px; display: grid; place-items: center; background: #ece9d8; }
.editor button svg { width: 12px; height: 12px; }
.props .thumb { height: 389px; }

.mdi { flex: 1; min-width: 0; overflow: hidden; background: #a0a0a0; border: 1px solid #828790; border-right: 0; }
.child-win { max-width: 465px; padding: 0 6px 6px; background: #b9d1ea; border: 1px solid #000; border-radius: 6px 6px 0 0; box-shadow: inset -1px -1px #2fd0e8, inset 1px 1px #dfeaf5; }
.child-title { display: flex; align-items: center; gap: 2px; height: 25px; margin: 0 -5px; padding: 1px 4px 0 1px; background: linear-gradient(#98b4d2, #b9d1ea); font: 12px/18px "Noto Sans", sans-serif; border-radius: 5px 5px 0 0; }
.child-title h2 { flex: 1; }
.form-icon { width: 18px; height: 16px; }
.child-title button { display: grid; place-items: center; width: 16px; height: 16px; border: 1px solid #4f6a86; border-radius: 2px; background: linear-gradient(#dbe7f3, #9fbad6); }
.child-title button svg { width: 12px; height: 12px; }
.child-title .close { border-color: #5a1a18; background: linear-gradient(#e0a898, #b8402c); }
.client { border: 1px solid #828790; background: #fff; padding-bottom: 9px; }
.canvas { position: relative; max-width: 376px; padding: 2px 2px 15px 2px; background: #f0f0f0; }
.canvas > .dots { position: absolute; left: 7px; top: 21px; width: calc(100% - 7px); height: calc(100% - 21px); }
.root { position: relative; border: 1px solid #f00; padding: 2px 4px 3px 2px; background: #f0f0f0; }
.vbox { position: relative; background: #f0f0f0; border: 1px solid #00a800; padding: 1px 3px 0 1px; }
.vbox:first-child { border-bottom: 0; }
fieldset { position: relative; min-width: 0; height: 182px; margin: 0; padding: 28px 0 0 7px; border: 1px solid #dcdcdc; border-bottom: 0; }
legend { position: relative; padding: 0 1px; line-height: 15px; }
fieldset > .dots { position: absolute; left: 6px; top: 6px; width: calc(100% - 12px); height: 162px; }
.row { position: relative; display: flex; height: 21px; }
.cap { flex: 0 0 104px; }
.cap label { display: inline-block; height: 20px; padding: 0 3px; background: #f0f0f0; border: 1px solid #a3a3a3; box-shadow: 1px 1px #fff; font: bold 13px/18px "Liberation Mono", monospace; }
.field { position: relative; flex: 0 0 215px; display: flex; gap: 1px; height: 19px; margin-top: 1px; background: #f0f0f0; }
.field input { flex: 1; min-width: 0; height: 19px; padding-left: 1px; background: #fff; border: 1px solid #ababab; }
.field button { width: 28px; display: grid; place-items: center; background: #e1e1e1; border: 1px solid #adadad; }
.field button svg { width: 18px; height: 17px; }
.combo select { flex: 1; background: #fff; border: 1px solid #ababab; }
.combo svg { position: absolute; right: 0; top: 0; width: 17px; height: 19px; background: #e1e1e1; border: 1px solid #adadad; }
.handles { position: absolute; inset: -3px; display: grid; grid-template-columns: repeat(3, 6px); justify-content: space-between; align-content: space-between; }
.handles i { width: 6px; height: 6px; background: #fff; border: 1px solid #000; }
.handles .solid { background: #2200ff; border-color: #2200ff; }
.lower { height: 65px; margin-top: 1px; }
.lower .dots { width: calc(100% - 2px); height: 44px; margin: 18px 0 0 5px; }
.child-status { display: flex; align-items: center; justify-content: space-between; height: 23px; padding: 0 2px 0 7px; background: #f0f0f0; font: 12px/18px "Noto Sans", sans-serif; }
.child-status svg { align-self: flex-end; width: 9px; height: 9px; }

.marks { position: absolute; left: 0; top: 0; width: 803px; height: 903px; pointer-events: none; }
.note { position: absolute; left: 74px; top: 574px; font: 16px/22px "Noto Sans CJK TC", sans-serif; color: #ff3838; white-space: nowrap; pointer-events: none; }
</style>
